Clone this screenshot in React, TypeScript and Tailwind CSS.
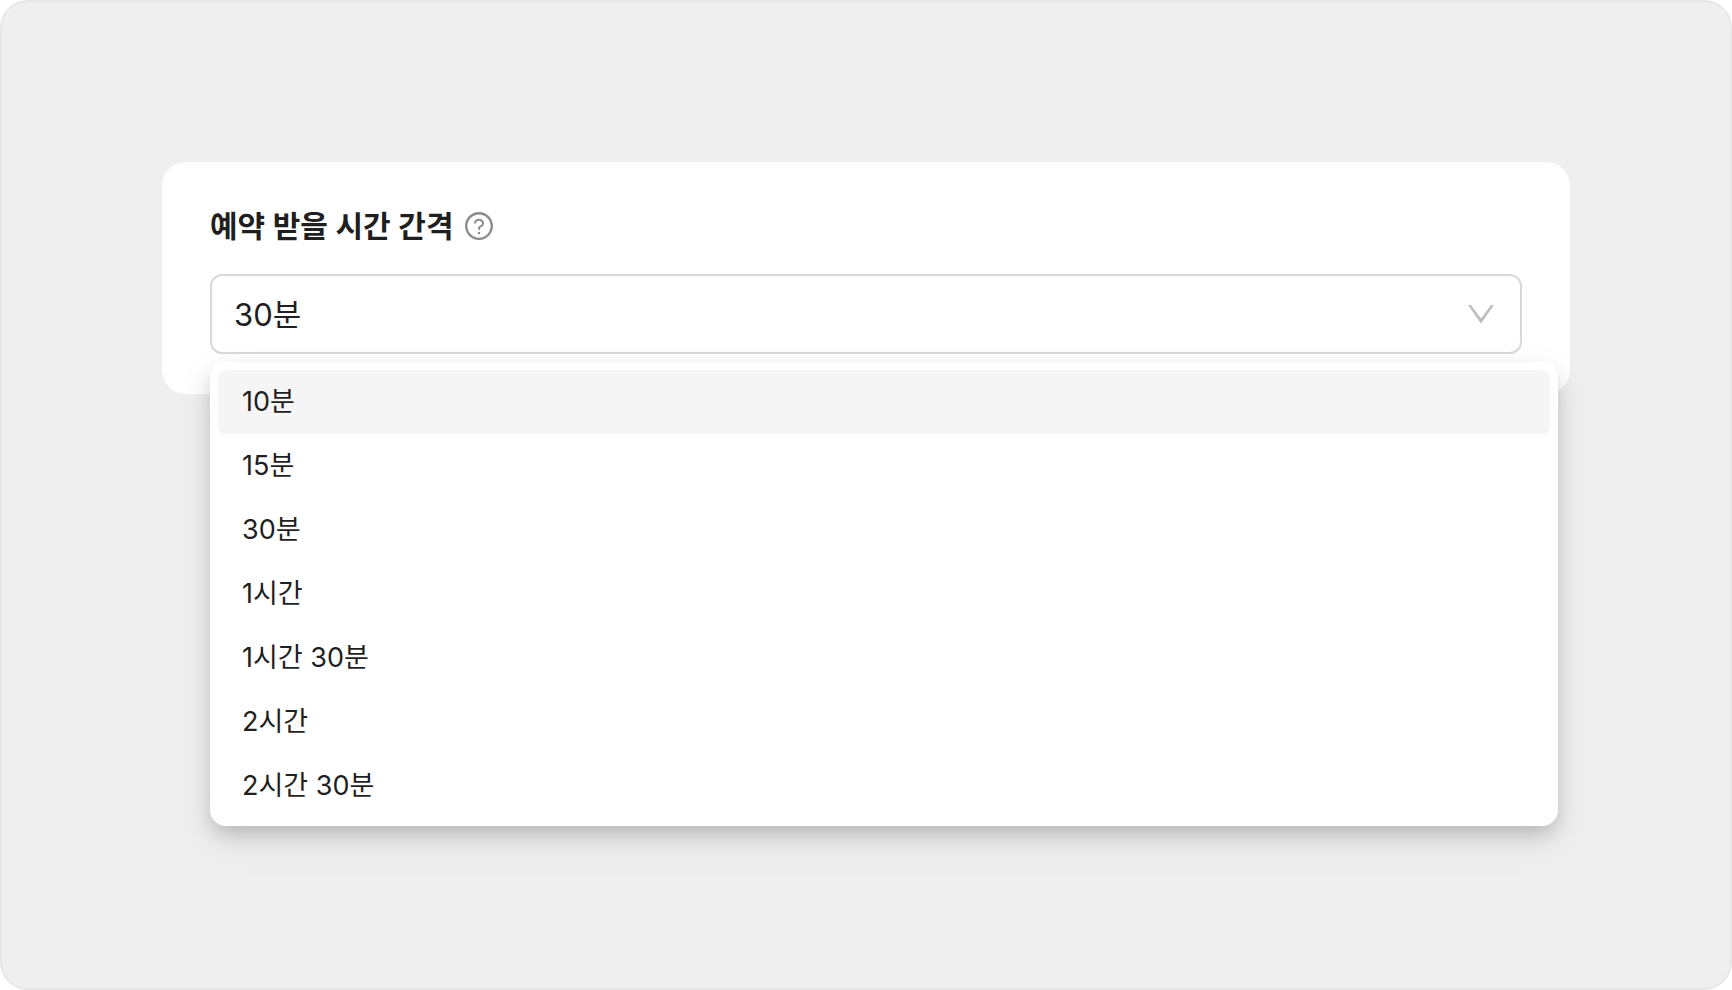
import React, { useState } from 'react';
import { AiOutlineQuestionCircle } from 'react-icons/ai';

const INTERVALS = ['10분', '15분', '30분', '1시간', '1시간 30분', '2시간', '2시간 30분'];

interface OptionListProps {
  options: string[];
  active: string;
  onHover: (option: string) => void;
  onSelect: (option: string) => void;
}

const OptionList: React.FC<OptionListProps> = ({ options, active, onHover, onSelect }) => {
  return (
    <ul className="absolute top-full left-0 -right-9 z-10 mt-2 rounded-2xl bg-white p-2 shadow-[0_10px_20px_-2px_rgba(0,0,0,0.2),0_14px_44px_4px_rgba(0,0,0,0.05)]">
      {options.map((option) => (
        <li key={option}>
          <button
            type="button"
            onMouseEnter={() => onHover(option)}
            onClick={() => onSelect(option)}
            className={`flex h-16 w-full items-center rounded-lg px-6 text-left text-[27px] ${
              option === active ? 'bg-[#f5f5f5]' : 'bg-white'
            }`}
          >
            {option}
          </button>
        </li>
      ))}
    </ul>
  );
};

const App: React.FC = () => {
  const [value, setValue] = useState('30분');
  const [active, setActive] = useState('10분');

  return (
    <div className="bg-white font-['Inter','Noto_Sans_CJK_KR',sans-serif] text-[#1f1f1f]">
      <main className="min-h-screen rounded-[28px] border-2 border-[#e7e7e7] bg-[#efefef] p-40">
        <section className="rounded-3xl bg-white px-12 pt-11 pb-10">
          <div className="flex h-10 items-center gap-2.5">
            <label htmlFor="interval" className="text-[30px] leading-10 font-semibold">
              예약 받을 시간 간격
            </label>
            <button type="button" aria-label="도움말" className="text-[#8c8c8c]">
              <AiOutlineQuestionCircle className="size-8" />
            </button>
          </div>

          <div className="relative mt-7">
            <select
              id="interval"
              value={value}
              onChange={(e) => setValue(e.target.value)}
              className="block h-20 w-full appearance-none rounded-xl border-2 border-[#d9d9d9] bg-white px-[22px] pt-0.5 text-[31px] outline-none"
            >
              {INTERVALS.map((interval) => (
                <option key={interval}>{interval}</option>
              ))}
            </select>
            <svg
              viewBox="0 0 26 18"
              className="pointer-events-none absolute inset-y-0 right-7 my-auto h-[18px] w-[26px] fill-[#bfbfbf]"
              aria-hidden="true"
            >
              <path d="M0 0H3L13 13.6L23 0H26L13.9 17.4Q13 18.6 12.1 17.4Z" />
            </svg>
            <OptionList options={INTERVALS} active={active} onHover={setActive} onSelect={setValue} />
          </div>
        </section>
      </main>
    </div>
  );
};

export default App;
